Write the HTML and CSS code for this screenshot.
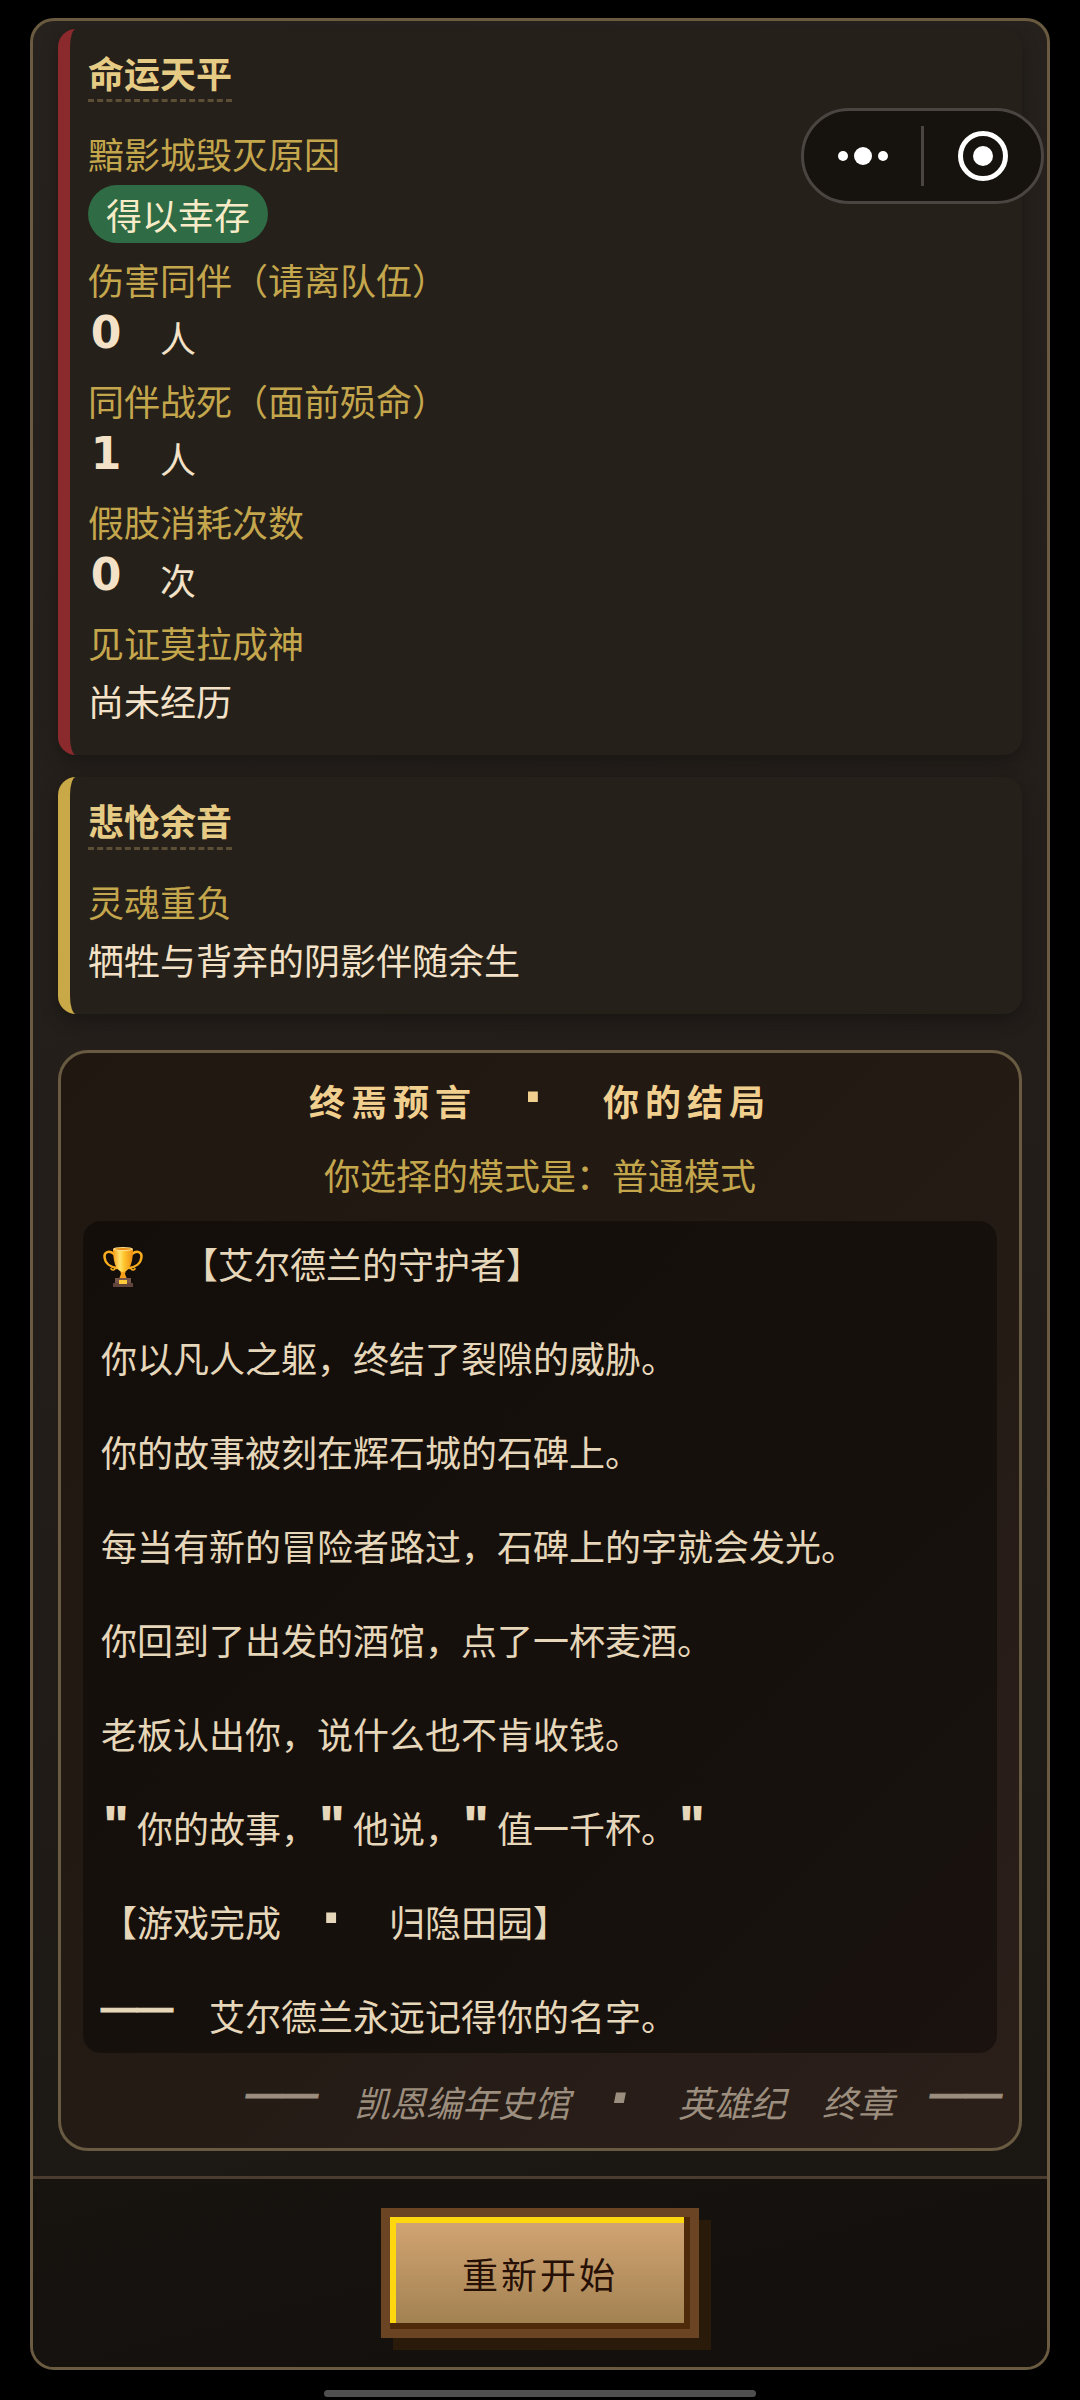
FILE: index.html
```html
<!DOCTYPE html>
<html lang="zh-CN">
<head>
<meta charset="utf-8">
<meta name="viewport" content="width=device-width, initial-scale=1">
<title>终焉预言</title>
<link rel="stylesheet" href="styles.css">
</head>
<body>
<main class="panel">
  <div class="content">
    <section class="card card-fate">
      <h2 class="card-title">命运天平</h2>
      <dl class="stats">
        <div class="stat"><dt>黯影城毁灭原因</dt><dd><span class="pill">得以幸存</span></dd></div>
        <div class="stat"><dt>伤害同伴（请离队伍）</dt><dd><span class="px px-digit">0</span>　人</dd></div>
        <div class="stat"><dt>同伴战死（面前殒命）</dt><dd><span class="px px-digit">1</span>　人</dd></div>
        <div class="stat"><dt>假肢消耗次数</dt><dd><span class="px px-digit">0</span>　次</dd></div>
        <div class="stat"><dt>见证莫拉成神</dt><dd>尚未经历</dd></div>
      </dl>
    </section>
    <section class="card card-echo">
      <h2 class="card-title">悲怆余音</h2>
      <dl class="stats">
        <div class="stat"><dt>灵魂重负</dt><dd>牺牲与背弃的阴影伴随余生</dd></div>
      </dl>
    </section>
    <section class="ending">
      <h2 class="ending-title">终焉预言　<span class="px px-dot">·</span>　你的结局</h2>
      <p class="ending-mode">你选择的模式是：普通模式</p>
      <div class="story">
        <p><svg class="trophy" viewBox="0 0 45 42" role="img" aria-label="奖杯">
          <defs>
            <linearGradient id="cup" x1="0" x2="1" y1="0" y2="0"><stop offset="0" stop-color="#f79d18"/><stop offset=".35" stop-color="#ffe36b"/><stop offset=".55" stop-color="#ffc62e"/><stop offset="1" stop-color="#ee8b12"/></linearGradient>
          </defs>
          <path d="M13 8C8 4 3 6 3.500 11C4 17 9 21 16 22M31 8C36 4 41 6 40.500 11C40 17 35 21 28 22" fill="none" stroke="#f9ad1e" stroke-width="2.500" stroke-linecap="round"/>
          <path d="M10 22a2 2 0 1 0 4 0M30 22a2 2 0 1 0 4 0" fill="none" stroke="#f9ad1e" stroke-width="1.500"/>
          <path d="M19 24h6l-1 4 2 5h-8l2-5z" fill="#f5a01a"/>
          <path d="M12 3C12 14 14 25 22 26C30 25 32 14 32 3Z" fill="url(#cup)"/>
          <ellipse cx="22" cy="3" rx="10" ry="2" fill="#ffe08a"/>
          <ellipse cx="22" cy="3" rx="8" ry="1" fill="#e98f14"/>
          <path d="M14 32h16v6H14z" fill="#785549"/>
          <path d="M12 37h20v4H12z" fill="#61443b"/>
          <path d="M18 34h8v4h-8z" fill="#ffca3a"/>
        </svg>　【艾尔德兰的守护者】</p>
        <p>你以凡人之躯，终结了裂隙的威胁。</p>
        <p>你的故事被刻在辉石城的石碑上。</p>
        <p>每当有新的冒险者路过，石碑上的字就会发光。</p>
        <p>你回到了出发的酒馆，点了一杯麦酒。</p>
        <p>老板认出你，说什么也不肯收钱。</p>
        <p><span class="px px-quote">"</span>你的故事，<span class="px px-quote">"</span>他说，<span class="px px-quote">"</span>值一千杯。<span class="px px-quote">"</span></p>
        <p>【游戏完成　<span class="px px-dot">·</span>　归隐田园】</p>
        <p><span class="px-dash">——</span>　艾尔德兰永远记得你的名字。</p>
      </div>
      <p class="signature"><span class="px-dash">——</span>　凯恩编年史馆　<span class="px px-dot">·</span>　英雄纪　终章　<span class="px-dash">——</span></p>
    </section>
  </div>
  <footer class="actions">
    <button class="restart" type="button">重新开始</button>
  </footer>
</main>
<div class="home-bar"></div>
<nav class="capsule" aria-label="小程序菜单">
  <button type="button" class="capsule-button" aria-label="更多">
    <svg width="54" height="54" viewBox="0 0 54 54" fill="#fff"><circle cx="7" cy="27" r="5"/><circle cx="27" cy="27" r="9"/><circle cx="47" cy="27" r="5"/></svg>
  </button>
  <span class="capsule-divider"></span>
  <button type="button" class="capsule-button" aria-label="关闭">
    <svg width="54" height="54" viewBox="0 0 54 54"><circle cx="27" cy="27" r="22.500" fill="none" stroke="#fff" stroke-width="5"/><circle cx="27" cy="27" r="10" fill="#fff"/></svg>
  </button>
</nav>
</body>
</html>
```
FILE: styles.css
```css
* {
  box-sizing: border-box;
  margin: 0;
  padding: 0;
}

body {
  min-height: 100vh;
  display: flex;
  flex-direction: column;
  background: #000;
  color: #f3e2c7;
  font: 36px/58px "Noto Sans CJK SC", sans-serif;
  text-spacing-trim: space-all;
}

.panel {
  flex: 1;
  display: flex;
  flex-direction: column;
  margin: 18px 30px 20px;
  border: 3px solid #695a40;
  border-radius: 24px;
  background: linear-gradient(165deg, #27221d, #221d19 55%, #191612);
  overflow: hidden;
}

.content {
  flex: 1;
  padding: 8px 25px 25px;
}

/* Summary cards */
.card {
  margin-bottom: 22px;
  padding: 18px 18px 26px;
  border-left: 12px solid;
  border-radius: 18px;
  background: #25201a;
  box-shadow: 0 6px 18px rgba(0, 0, 0, 0.3);
}

.card-fate {
  border-color: #8b2a2c;
}

.card-echo {
  border-color: #c9a847;
}

.card-title {
  width: fit-content;
  margin-bottom: 22px;
  padding-bottom: 2px;
  border-bottom: 3px dashed #5d4f36;
  color: #e6cb84;
  font-size: 36px;
  line-height: 50px;
}

.stats {
  display: flex;
  flex-direction: column;
  gap: 5px;
}

.stat dt {
  color: #c4a64c;
}

.pill {
  display: block;
  width: fit-content;
  margin: 3px 0 2px;
  padding: 0 18px;
  border-radius: 29px;
  background: #2f6b45;
  color: #f8ecc8;
}

/* Heavy display glyphs, one full-width cell each */
.px {
  display: inline-block;
  width: 36px;
  height: 36px;
  font-family: "DejaVu Sans", sans-serif;
  font-weight: 700;
  line-height: 36px;
  letter-spacing: 0;
  text-align: center;
}

.px-digit {
  font-size: 44px;
  vertical-align: 5px;
}

.px-dot {
  padding-right: 8px;
  font-size: 56px;
  vertical-align: 0;
}

.px-quote {
  padding-right: 6px;
  font-family: Inter, "DejaVu Sans", sans-serif;
  font-size: 44px;
  font-weight: 900;
  vertical-align: 5px;
}

.px-dash {
  font-family: "Liberation Sans", sans-serif;
  font-weight: 700;
  line-height: 36px;
  vertical-align: 11px;
  -webkit-text-stroke: 1px;
}

/* Ending */
.ending {
  display: flex;
  flex-direction: column;
  gap: 16px;
  margin-top: 36px;
  padding: 18px 0;
  border: 3px solid #695a42;
  border-radius: 30px;
  background: linear-gradient(135deg, #201711, #231a14 45%, #2b1f1a);
}

.ending-title {
  height: 58px;
  color: #f1d08f;
  font-size: 36px;
  letter-spacing: 6px;
  text-align: center;
}

.ending-title .px {
  margin-right: 6px;
}

.ending-mode {
  color: #c4a64c;
  text-align: center;
}

.story {
  display: flex;
  flex-direction: column;
  gap: 36px;
  margin: 2px 22px 0;
  padding: 13px 18px 9px;
  border-radius: 18px;
  background: linear-gradient(135deg, #140e0a, #15100b 50%, #19120f);
  color: #e6d7ba;
}

.story p {
  height: 58px;
}

.trophy {
  width: 45px;
  height: 42px;
  vertical-align: -9px;
}

.signature {
  height: 58px;
  margin-top: 3px;
  padding-right: 17px;
  color: #9c8e7e;
  font-style: italic;
  text-align: right;
}

/* Bottom actions */
.actions {
  display: flex;
  justify-content: center;
  padding: 29px;
  border-top: 3px solid #4a3d30;
  background: linear-gradient(165deg, #171410, #130f0c);
}

.restart {
  height: 130px;
  padding: 0 72px;
  border: 9px solid #6b4423;
  background: linear-gradient(#d4a574, #a08050);
  box-shadow: inset -6px -6px 0 #4e2a0a, inset 6px 6px 0 #ffd70f, 12px 12px 0 #2a1a0a;
  color: #260f05;
  font: inherit;
  letter-spacing: 3px;
}

.home-bar {
  width: 40%;
  height: 7px;
  margin: 0 auto 3px;
  border-radius: 4px;
  background: #4f4f4f;
}

/* Floating capsule menu */
.capsule {
  position: absolute;
  top: 108px;
  right: 36px;
  display: flex;
  align-items: center;
  width: 243px;
  height: 96px;
  border: 3px solid #4a4541;
  border-radius: 48px;
  background: #16120d;
}

.capsule-button {
  display: flex;
  flex: 1;
  align-items: center;
  justify-content: center;
  height: 100%;
  border: 0;
  background: none;
}

.capsule-divider {
  width: 3px;
  height: 60px;
  background: #4a4541;
}
```
